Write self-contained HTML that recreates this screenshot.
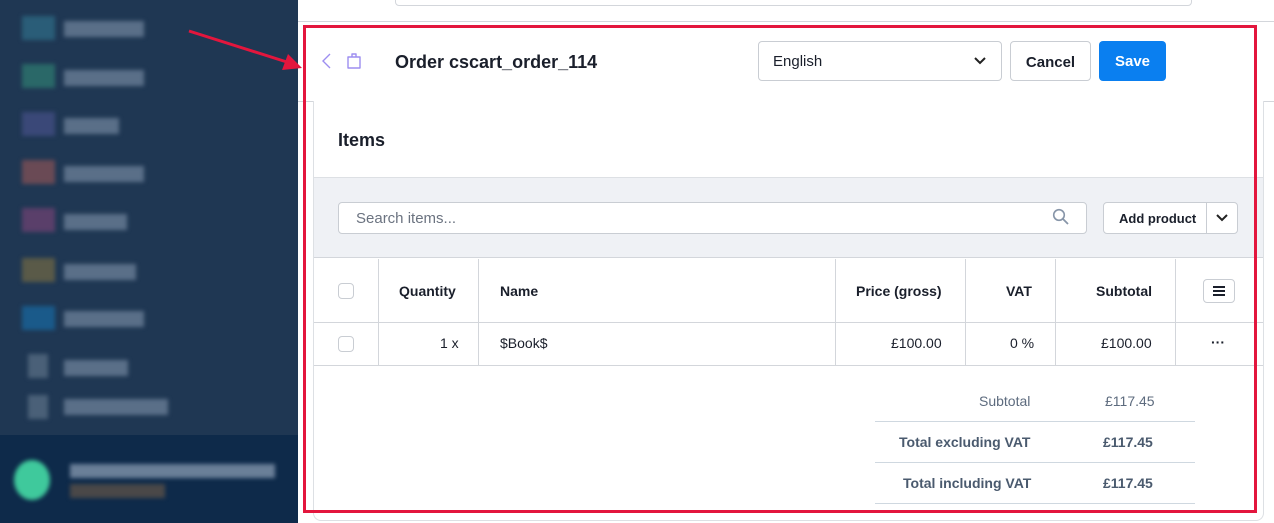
<!DOCTYPE html>
<html><head><meta charset="utf-8"><style>
*{box-sizing:border-box;margin:0;padding:0}
body{width:1274px;height:523px;overflow:hidden;position:relative;background:#fff;font-family:"Liberation Sans",sans-serif;color:#1a1f2b}
.a{position:absolute}
.sb{left:0;top:0;width:298px;height:523px;background:#1f3753}
.sbb{left:0;top:435px;width:298px;height:88px;background:#0e2a4a}
.ic{width:33px;height:24px;filter:blur(2px)}
.tx{height:16px;filter:blur(2px);background:#5a6f88}
.b{font-weight:bold}
.vl{width:1px;background:#d3d6db}
.hl{height:1px;background:#d3d6db}
.cb{width:16px;height:16px;border:1px solid #c9cdd3;border-radius:4px;background:#fff}
.th{font-size:14px;font-weight:bold;top:283px}
.td{font-size:14px;top:335px}
</style></head><body>
<div class="a sb"></div>
<div class="a sbb"></div>
<div class="a ic" style="left:22px;top:16px;background:#2a5d78"></div><div class="a tx" style="left:64px;top:21px;width:80px"></div>
<div class="a ic" style="left:22px;top:64px;background:#2a6868"></div><div class="a tx" style="left:64px;top:70px;width:80px"></div>
<div class="a ic" style="left:22px;top:112px;background:#3a4878"></div><div class="a tx" style="left:64px;top:118px;width:55px"></div>
<div class="a ic" style="left:22px;top:160px;background:#6a4a55"></div><div class="a tx" style="left:64px;top:166px;width:80px"></div>
<div class="a ic" style="left:22px;top:208px;background:#5a3f6a"></div><div class="a tx" style="left:64px;top:214px;width:63px"></div>
<div class="a ic" style="left:22px;top:258px;background:#5a5a48"></div><div class="a tx" style="left:64px;top:264px;width:72px"></div>
<div class="a ic" style="left:22px;top:306px;background:#1a5a8a"></div><div class="a tx" style="left:64px;top:311px;width:80px"></div>
<div class="a ic" style="left:28px;top:354px;width:20px;background:#4a6078"></div><div class="a tx" style="left:64px;top:360px;width:64px"></div>
<div class="a ic" style="left:28px;top:395px;width:20px;background:#4a6078"></div><div class="a tx" style="left:64px;top:399px;width:104px"></div>
<div class="a" style="left:14px;top:460px;width:36px;height:40px;border-radius:50%;background:#3fc99c;filter:blur(2px)"></div>
<div class="a tx" style="left:70px;top:464px;width:205px;height:14px;background:#6a7f98"></div>
<div class="a tx" style="left:70px;top:484px;width:95px;height:14px;background:#4a4848"></div>

<div class="a" style="left:395px;top:-4px;width:797px;height:10px;border:1px solid #d3d6db;border-radius:4px"></div>
<div class="a hl" style="left:298px;top:21px;width:976px"></div>
<div class="a hl" style="left:298px;top:101px;width:976px"></div>
<svg class="a" style="left:318px;top:52px" width="50" height="18"><path d="M12 2 L5 9 L12 16" fill="none" stroke="#9d8ef0" stroke-width="1.4"/><path d="M30 5 h12 v11 h-12 z M34 5 v-3 h4 v3" fill="none" stroke="#9d8ef0" stroke-width="1.4" stroke-linejoin="round"/></svg>
<div class="a b" style="left:395px;top:52px;font-size:18px">Order cscart_order_114</div>
<div class="a" style="left:758px;top:41px;width:244px;height:40px;border:1px solid #c9cdd3;border-radius:4px;font-size:15px;padding:11px 14px">English</div>
<svg class="a" style="left:973px;top:56px" width="14" height="10"><path d="M2 2 L7 7 L12 2" fill="none" stroke="#222" stroke-width="2"/></svg>
<div class="a b" style="left:1010px;top:41px;width:81px;height:40px;border:1px solid #c9cdd3;border-radius:4px;font-size:15px;text-align:center;line-height:41px">Cancel</div>
<div class="a b" style="left:1099px;top:41px;width:67px;height:40px;background:#0a7ff0;border-radius:4px;font-size:15px;color:#fff;text-align:center;line-height:42px">Save</div>

<div class="a" style="left:313px;top:101px;width:951px;height:420px;border:1px solid #dde0e4;border-top:none;border-radius:0 0 8px 8px;background:#fff"></div>
<div class="a b" style="left:338px;top:130px;font-size:18px">Items</div>
<div class="a" style="left:314px;top:177px;width:949px;height:81px;background:#eff1f5;border-top:1px solid #dde0e4;border-bottom:1px solid #d3d6db"></div>
<div class="a" style="left:338px;top:202px;width:749px;height:32px;background:#fff;border:1px solid #c9cdd3;border-radius:4px;font-size:15px;color:#6b7380;padding:7px 17px">Search items...</div>
<svg class="a" style="left:1052px;top:208px" width="18" height="18"><circle cx="7" cy="7" r="5.3" fill="none" stroke="#8795a8" stroke-width="1.6"/><path d="M11 11 L16 16" stroke="#8795a8" stroke-width="1.8"/></svg>
<div class="a" style="left:1103px;top:202px;width:135px;height:32px;background:#fff;border:1px solid #c9cdd3;border-radius:4px"></div>
<div class="a b" style="left:1119px;top:211px;font-size:13px">Add product</div>
<div class="a vl" style="left:1206px;top:203px;height:30px;background:#c9cdd3"></div>
<svg class="a" style="left:1216px;top:213px" width="12" height="9"><path d="M1 2 L6 7 L11 2" fill="none" stroke="#222" stroke-width="2"/></svg>

<div class="a hl" style="left:314px;top:322px;width:949px"></div>
<div class="a hl" style="left:314px;top:365px;width:949px"></div>
<div class="a vl" style="left:378px;top:259px;height:106px"></div>
<div class="a vl" style="left:478px;top:259px;height:106px"></div>
<div class="a vl" style="left:835px;top:259px;height:106px"></div>
<div class="a vl" style="left:965px;top:259px;height:106px"></div>
<div class="a vl" style="left:1055px;top:259px;height:106px"></div>
<div class="a vl" style="left:1175px;top:259px;height:106px"></div>
<div class="a cb" style="left:338px;top:283px"></div>
<div class="a cb" style="left:338px;top:336px"></div>
<div class="a th" style="left:399px">Quantity</div>
<div class="a th" style="left:500px">Name</div>
<div class="a th" style="left:856px">Price (gross)</div>
<div class="a th" style="left:1006px">VAT</div>
<div class="a th" style="left:1096px">Subtotal</div>
<div class="a" style="left:1203px;top:279px;width:32px;height:24px;border:1px solid #c9cdd3;border-radius:4px"></div>
<svg class="a" style="left:1212px;top:285px" width="14" height="12"><path d="M1 2h12M1 6h12M1 10h12" stroke="#1a1f2b" stroke-width="2"/></svg>
<div class="a td" style="left:440px">1 x</div>
<div class="a td" style="left:500px">$Book$</div>
<div class="a td" style="left:891px">£100.00</div>
<div class="a td" style="left:1010px">0 %</div>
<div class="a td" style="left:1101px">£100.00</div>
<div class="a b" style="left:1211px;top:334px;font-size:14px">···</div>

<div class="a" style="left:979px;top:393px;font-size:14px;color:#5d6b7e">Subtotal</div>
<div class="a" style="left:1105px;top:393px;font-size:14px;color:#5d6b7e">£117.45</div>
<div class="a hl" style="left:875px;top:421px;width:320px;background:#cfd8e0"></div>
<div class="a b" style="left:899px;top:434px;font-size:14px;color:#4a5a6e">Total excluding VAT</div>
<div class="a b" style="left:1103px;top:434px;font-size:14px;color:#4a5a6e">£117.45</div>
<div class="a hl" style="left:875px;top:462px;width:320px;background:#cfd8e0"></div>
<div class="a b" style="left:903px;top:475px;font-size:14px;color:#4a5a6e">Total including VAT</div>
<div class="a b" style="left:1103px;top:475px;font-size:14px;color:#4a5a6e">£117.45</div>
<div class="a hl" style="left:875px;top:503px;width:320px;background:#cfd8e0"></div>

<div class="a" style="left:303px;top:25px;width:954px;height:488px;border:3px solid #e3163d"></div>
<svg class="a" style="left:180px;top:25px" width="130" height="50"><path d="M9 6 L110 38" stroke="#e3163d" stroke-width="3"/><path d="M122 43 L102 45 L108 29 z" fill="#e3163d"/></svg>
</body></html>
